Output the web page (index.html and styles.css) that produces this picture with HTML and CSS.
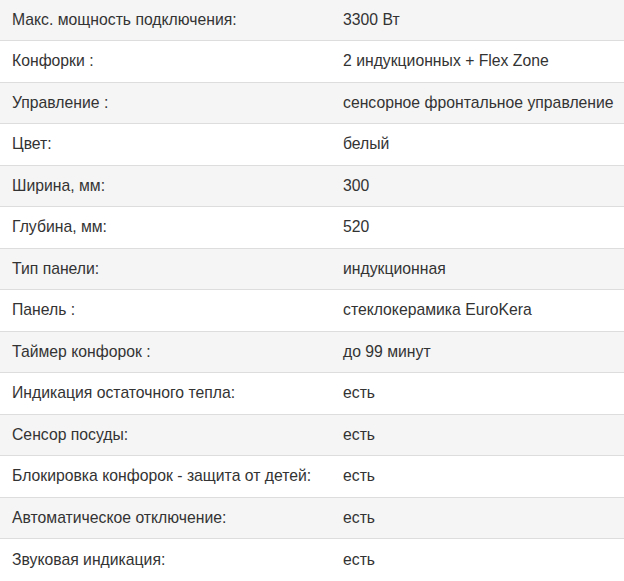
FILE: index.html
```html
<!DOCTYPE html>
<html lang="ru">
<head>
<meta charset="utf-8">
<link rel="stylesheet" href="styles.css">
</head>
<body>
<table class="specs">
<tbody>
<tr><td class="name">Макс. мощность подключения:</td><td class="val">3300 Вт</td></tr>
<tr><td class="name">Конфорки :</td><td class="val">2 индукционных + Flex Zone</td></tr>
<tr><td class="name">Управление :</td><td class="val">сенсорное фронтальное управление</td></tr>
<tr><td class="name">Цвет:</td><td class="val">белый</td></tr>
<tr><td class="name">Ширина, мм:</td><td class="val">300</td></tr>
<tr><td class="name">Глубина, мм:</td><td class="val">520</td></tr>
<tr><td class="name">Тип панели:</td><td class="val">индукционная</td></tr>
<tr><td class="name">Панель :</td><td class="val">стеклокерамика EuroKera</td></tr>
<tr><td class="name">Таймер конфорок :</td><td class="val">до 99 минут</td></tr>
<tr><td class="name">Индикация остаточного тепла:</td><td class="val">есть</td></tr>
<tr><td class="name">Сенсор посуды:</td><td class="val">есть</td></tr>
<tr><td class="name">Блокировка конфорок - защита от детей:</td><td class="val">есть</td></tr>
<tr><td class="name">Автоматическое отключение:</td><td class="val">есть</td></tr>
<tr><td class="name">Звуковая индикация:</td><td class="val">есть</td></tr>
</tbody>
</table>
</body>
</html>
```
FILE: styles.css
```css
html, body {
  margin: 0;
  padding: 0;
  background: #fff;
}
.specs {
  width: 100%;
  border-collapse: collapse;
  table-layout: fixed;
  font-family: "Liberation Sans", Arial, sans-serif;
  font-size: 15.75px;
  color: #333;
}
.specs tr {
  height: 41.5px;
}
.specs tr:first-child {
  height: 40.5px;
}
.specs tr:nth-child(odd) {
  background: #f5f5f5;
}
.specs td {
  padding: 0 12px;
  border-top: 1px solid #ddd;
  vertical-align: middle;
  line-height: 20px;
  white-space: nowrap;
}
.specs tr:first-child td {
  border-top: none;
}
.specs td.name {
  width: 307px;
}
.specs td.val {
  padding-right: 0;
}
```
